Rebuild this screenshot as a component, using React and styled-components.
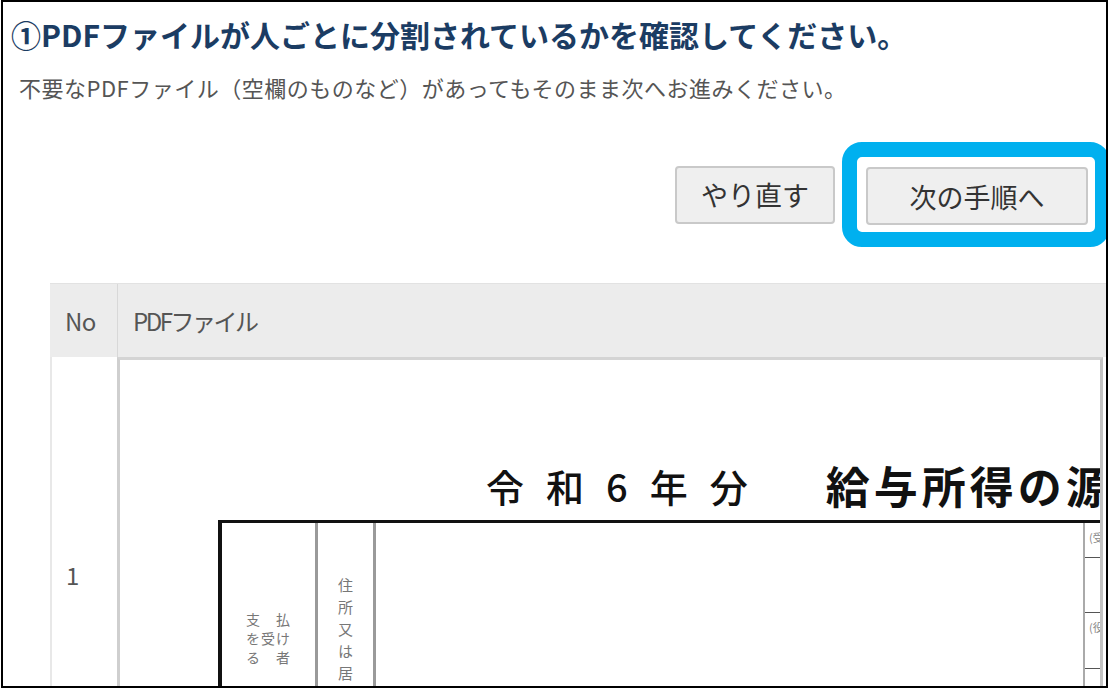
import React from 'react'
import styled, { createGlobalStyle } from 'styled-components'

const GlobalStyle = createGlobalStyle`
  *, *::before, *::after { box-sizing: border-box; }
  body {
    margin: 0;
    background: #fff;
    font-family: "Noto Sans CJK JP", "Noto Sans", sans-serif;
  }
`

function App() {
  return (
    <>
      <GlobalStyle />
      <Frame>
        <Title>①PDFファイルが人ごとに分割されているかを確認してください。</Title>
        <Lead>不要なPDFファイル（空欄のものなど）があってもそのまま次へお進みください。</Lead>

        <Toolbar>
          <Button $w={160}>やり直す</Button>
          <Highlight>
            <Button $w={222}>次の手順へ</Button>
          </Highlight>
        </Toolbar>

        <Table>
          <HeadRow>
            <HeadCell $ls={-0.5}>No</HeadCell>
            <HeadCell $ls={-2.5} $divider>PDFファイル</HeadCell>
          </HeadRow>
          <BodyRow>
            <NoCell>1</NoCell>
            <Preview>
              <DocTitle>
                <YearLabel>令和6年分</YearLabel>
                <FormName>給与所得の源泉徴収票</FormName>
              </DocTitle>
              <Form>
                <PayeeCell>
                  <Label>支　払</Label>
                  <Label>を受け</Label>
                  <Label>る　者</Label>
                </PayeeCell>
                <AddressCell>
                  <VerticalText>住所又は居所</VerticalText>
                </AddressCell>
                <MainCell />
                <SideCell>
                  <SideBox $h={35}>(受給者番号)</SideBox>
                  <SideBox $h={55} />
                  <SideBox $h={56}>(役職名)</SideBox>
                </SideCell>
              </Form>
            </Preview>
          </BodyRow>
        </Table>
      </Frame>
    </>
  )
}

export default App

const Frame = styled.div`
  width: 1107px;
  height: 688px;
  margin-left: 1px;
  border: 2px solid #000;
  overflow: hidden;
  background: #fff;
`
const Title = styled.h1`
  margin: 12px 0 0;
  padding-left: 8px;
  font-size: 30px;
  line-height: 40px;
  font-weight: 700;
  color: #1b3c63;
  white-space: nowrap;
`
const Lead = styled.p`
  margin: 18px 0 0;
  padding-left: 16px;
  font-size: 22px;
  line-height: 30px;
  letter-spacing: 0.5px;
  color: #555;
  white-space: nowrap;
`
const Toolbar = styled.div`
  display: flex;
  justify-content: flex-end;
  align-items: center;
  gap: 7px;
  margin: 40px -4px 0 0;
`
const Button = styled.button`
  width: ${p => p.$w}px;
  height: 58px;
  padding: 0;
  border: 2px solid #c9c9c9;
  border-radius: 4px;
  background: #efefef;
  color: #333;
  font-family: inherit;
  font-size: 27px;
  cursor: pointer;
`
const Highlight = styled.div`
  border: 15px solid #00b0ef;
  border-radius: 20px;
  padding: 10px 7px 7px 9px;
  background: #fff;
`
const Table = styled.div`
  width: 1150px;
  margin: 36px 0 0 47px;
`
const HeadRow = styled.div`
  display: grid;
  grid-template-columns: 67px 1fr;
  height: 74px;
  background: #ececec;
  border-top: 1px solid #e2e2e2;
`
const HeadCell = styled.div`
  display: flex;
  align-items: center;
  padding-left: 15px;
  font-size: 24px;
  letter-spacing: ${p => p.$ls}px;
  color: #555;
  border-left: ${p => (p.$divider ? '1px solid #d8d8d8' : 'none')};
`
const BodyRow = styled.div`
  display: grid;
  grid-template-columns: 67px 986px;
  height: 420px;
`
const NoCell = styled.div`
  padding: 203px 0 0 14px;
  border-left: 2px solid #e8e8e8;
  font-size: 24px;
  line-height: 30px;
  color: #555;
`
const Preview = styled.div`
  padding-top: 101px;
  border-left: 3px solid #cfcfcf;
  border-top: 3px solid #d4d4d4;
  border-right: 3px solid #c4c4c4;
  background: #fff;
  overflow: hidden;
`
const DocTitle = styled.div`
  display: flex;
  align-items: center;
  gap: 56px;
  margin-left: 366px;
  height: 48px;
  color: #111;
  white-space: nowrap;
`
const YearLabel = styled.span`
  font-size: 38px;
  letter-spacing: 22px;
  font-weight: 500;
`
const FormName = styled.span`
  font-size: 44px;
  letter-spacing: 4px;
  font-weight: 700;
`
const Form = styled.div`
  display: grid;
  grid-template-columns: 96px 58px 707px 160px;
  height: 300px;
  margin: 11px 0 0 98px;
  border-top: 3px solid #111;
  border-left: 4px solid #111;
  color: #777;
`
const PayeeCell = styled.div`
  display: flex;
  flex-direction: column;
  align-items: center;
  padding-top: 87px;
  border-right: 3px solid #9a9a9a;
`
const Label = styled.span`
  font-size: 14px;
  line-height: 19px;
  letter-spacing: 1px;
`
const AddressCell = styled.div`
  display: flex;
  justify-content: center;
  padding-top: 55px;
  border-right: 3px solid #9a9a9a;
`
const VerticalText = styled.span`
  writing-mode: vertical-rl;
  font-size: 15px;
  letter-spacing: 7px;
`
const MainCell = styled.div``
const SideCell = styled.div`
  border-left: 2px solid #aaa;
`
const SideBox = styled.div`
  height: ${p => p.$h}px;
  padding: 6px 0 0 4px;
  border-bottom: 1px solid #555;
  font-size: 11px;
  color: #888;
  white-space: nowrap;
`
